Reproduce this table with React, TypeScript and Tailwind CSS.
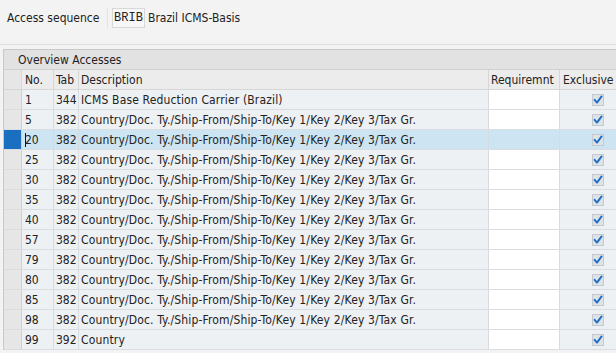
import React from "react";

const rows: { no: string; tab: string; desc: string; sel?: boolean; req?: boolean }[] = [
  { no: "1", tab: "344", desc: "ICMS Base Reduction Carrier (Brazil)", req: true },
  { no: "5", tab: "382", desc: "Country/Doc. Ty./Ship-From/Ship-To/Key 1/Key 2/Key 3/Tax Gr.", req: true },
  { no: "20", tab: "382", desc: "Country/Doc. Ty./Ship-From/Ship-To/Key 1/Key 2/Key 3/Tax Gr.", sel: true },
  { no: "25", tab: "382", desc: "Country/Doc. Ty./Ship-From/Ship-To/Key 1/Key 2/Key 3/Tax Gr.", req: true },
  { no: "30", tab: "382", desc: "Country/Doc. Ty./Ship-From/Ship-To/Key 1/Key 2/Key 3/Tax Gr.", req: true },
  { no: "35", tab: "382", desc: "Country/Doc. Ty./Ship-From/Ship-To/Key 1/Key 2/Key 3/Tax Gr.", req: true },
  { no: "40", tab: "382", desc: "Country/Doc. Ty./Ship-From/Ship-To/Key 1/Key 2/Key 3/Tax Gr.", req: true },
  { no: "57", tab: "382", desc: "Country/Doc. Ty./Ship-From/Ship-To/Key 1/Key 2/Key 3/Tax Gr.", req: true },
  { no: "79", tab: "382", desc: "Country/Doc. Ty./Ship-From/Ship-To/Key 1/Key 2/Key 3/Tax Gr.", req: true },
  { no: "80", tab: "382", desc: "Country/Doc. Ty./Ship-From/Ship-To/Key 1/Key 2/Key 3/Tax Gr.", req: true },
  { no: "85", tab: "382", desc: "Country/Doc. Ty./Ship-From/Ship-To/Key 1/Key 2/Key 3/Tax Gr.", req: true },
  { no: "98", tab: "382", desc: "Country/Doc. Ty./Ship-From/Ship-To/Key 1/Key 2/Key 3/Tax Gr.", req: true },
  { no: "99", tab: "392", desc: "Country", req: true },
];

function Check() {
  return (
    <svg width="12" height="12" viewBox="0 0 12 12">
      <rect x="0.5" y="0.5" width="11" height="11" fill="#dfe3e8" stroke="#c4c9cf" />
      <path d="M2.6 5.8 L5 8.6 L9.6 2.4" fill="none" stroke="#1c6fc1" strokeWidth="1.9" strokeLinecap="round" strokeLinejoin="round" />
    </svg>
  );
}

const cols = "grid grid-cols-[18px_32px_25px_410px_71px_60px]";

export default function App() {
  return (
    <div
      className="w-[616px] h-[353px] bg-[#f3f3f3] overflow-hidden text-[12px] text-[#222]"
      style={{ fontFamily: "'DejaVu Sans Condensed', 'DejaVu Sans', Tahoma, sans-serif" }}
    >
      <div className="h-[45px] border-b border-[#dedede] flex items-start pt-[8px] pl-[4px]">
        <div className="w-[104px] h-[20px] flex items-center pl-[3px] border-r border-[#e2e2e2]">Access sequence</div>
        <div
          className="ml-[4px] w-[33px] h-[20px] flex items-center justify-center border border-[#d8d8d8] bg-[#f7f7f7] text-[12px] text-[#222]"
          style={{ fontFamily: "'Liberation Mono', 'DejaVu Sans Mono', monospace" }}
        >
          BRIB
        </div>
        <div className="ml-[3px] h-[20px] flex items-center">Brazil ICMS-Basis</div>
      </div>
      <div className="ml-[3px] mt-[4px] border-l border-t border-[#c9c9c9]">
        <div className="h-[20px] bg-[#e2e2e2] border-b border-[#d0d0d0] flex items-center pl-[14px]">Overview Accesses</div>
        <div className={`${cols} h-[20px] bg-[#ececec] border-b border-[#d6d6d6]`}>
          <div className="border-r border-[#d6d6d6] bg-[#e6e6e6]" />
          <div className="border-r border-[#d6d6d6] flex items-center pl-[3px]">No.</div>
          <div className="border-r border-[#d6d6d6] flex items-center pl-[2px]">Tab</div>
          <div className="border-r border-[#d6d6d6] flex items-center pl-[2px]">Description</div>
          <div className="border-r border-[#d6d6d6] flex items-center pl-[2px]">Requiremnt</div>
          <div className="flex items-center pl-[3px]">Exclusive</div>
        </div>
        {rows.map((r) => (
          <div
            key={r.no}
            className={`${cols} h-[20px] border-b border-[#d9dde2] ${r.sel ? "bg-[#cde5f2]" : "bg-[#eef1f4]"}`}
          >
            <div className={`border-r border-[#d0d0d0] ${r.sel ? "bg-[#1b6fc0]" : "bg-[#e6e6e6]"}`} />
            <div className="border-r border-[#d6dbe0] flex items-center pl-[3px] relative">
              {r.sel && <span className="absolute left-[3px] top-[3px] w-px h-[14px] bg-[#111]" />}
              {r.no}
            </div>
            <div className="border-r border-[#d6dbe0] flex items-center pl-[2px]">{r.tab}</div>
            <div className="border-r border-[#d6dbe0] flex items-center pl-[2px] whitespace-nowrap overflow-hidden tracking-[0.15px]">{r.desc}</div>
            <div className={`border-r border-[#d6dbe0] ${r.req ? "bg-white" : ""}`} />
            <div className="flex items-center pl-[32px]">
              <Check />
            </div>
          </div>
        ))}
      </div>
    </div>
  );
}
